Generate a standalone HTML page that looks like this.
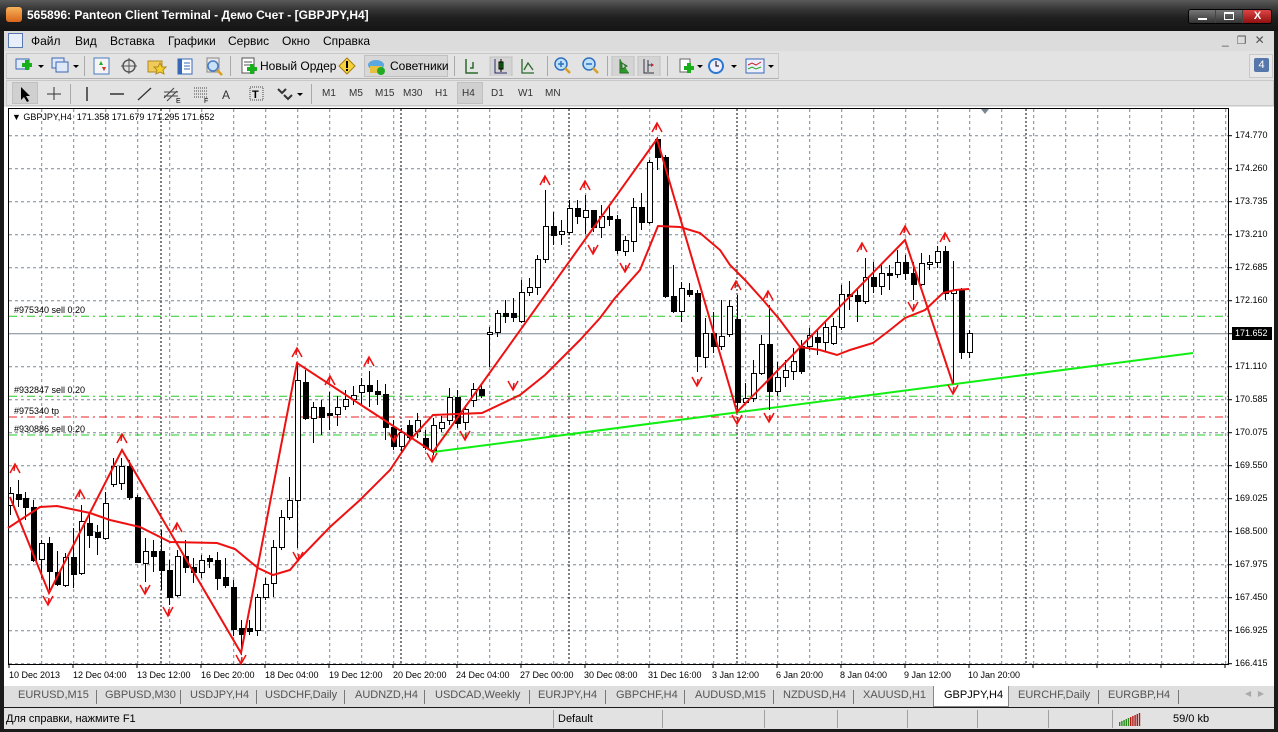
<!DOCTYPE html>
<html><head><meta charset="utf-8">
<style>
*{margin:0;padding:0;box-sizing:border-box}
body{width:1278px;height:732px;overflow:hidden;background:#1b1b1b;font-family:"Liberation Sans","DejaVu Sans",sans-serif;font-size:11px;color:#000;position:relative}
.a{position:absolute;white-space:nowrap}
#title{left:0;top:0;width:1278px;height:31px;background:linear-gradient(#5a5a5a 0,#3a3a3a 8px,#1e1e1e 18px,#141414 100%)}
#menu{left:4px;top:31px;width:1270px;height:20px;background:#dcdcdc}
#tb{left:4px;top:51px;width:1270px;height:56px;background:#e3e3e3}
.sep{position:absolute;width:1px;background:#a9a9a9}
.ico{position:absolute}
.tab{position:absolute;top:689px;font-size:11px;color:#555}
.tsep{position:absolute;top:690px;width:1px;height:14px;background:#777}
.ssep{position:absolute;top:710px;width:1px;height:18px;background:#a0a0a0}
</style></head><body>
<div class="a" id="title"></div>
<div class="a" style="left:6px;top:7px;width:16px;height:15px;border-radius:3px;background:linear-gradient(#f7b35a,#d9661b)"></div>
<div class="a" style="left:27px;top:8px;color:#fff;font-weight:bold;font-size:12px">565896: Panteon Client Terminal - Демо Счет - [GBPJPY,H4]</div>
<div class="a" style="left:1188px;top:9px;width:84px;height:15px;border:1px solid #000;border-radius:3px;overflow:hidden;background:#444">
 <div class="a" style="left:0;top:0;width:26px;height:13px;background:linear-gradient(#777,#333)"><div class="a" style="left:9px;top:8px;width:9px;height:2px;background:#fff"></div></div>
 <div class="a" style="left:27px;top:0;width:26px;height:13px;background:linear-gradient(#777,#333)"><div class="a" style="left:8px;top:2px;width:10px;height:8px;border:1px solid #fff;border-top-width:2px"></div></div>
 <div class="a" style="left:54px;top:0;width:29px;height:13px;background:linear-gradient(#d44,#901010);color:#fff;font-size:11px;font-weight:bold;text-align:center;line-height:13px">X</div>
</div>
<div class="a" id="menu"></div>
<div class="a" style="left:8px;top:33px;width:15px;height:15px;border:1px solid #5878b0;background:#e8eefc"></div>
<div class="a" style="left:31px;top:34px;font-size:12px">Файл</div>
<div class="a" style="left:75px;top:34px;font-size:12px">Вид</div>
<div class="a" style="left:110px;top:34px;font-size:12px">Вставка</div>
<div class="a" style="left:168px;top:34px;font-size:12px">Графики</div>
<div class="a" style="left:228px;top:34px;font-size:12px">Сервис</div>
<div class="a" style="left:282px;top:34px;font-size:12px">Окно</div>
<div class="a" style="left:323px;top:34px;font-size:12px">Справка</div>
<div class="a" style="left:1222px;top:33px;color:#555;font-size:12px;letter-spacing:8px">_<span style="font-size:11px">❐</span>✕</div>
<div class="a" id="tb"></div>
<div class="a" style="left:6px;top:53px;width:773px;height:26px;border:1px solid #c8c8c8;border-bottom-color:#b0b0b0"></div>
<div class="a" style="left:6px;top:80px;width:1268px;height:26px;border:1px solid #c8c8c8"></div>
<div class="sep" style="left:84px;top:56px;height:20px"></div>
<div class="sep" style="left:230px;top:56px;height:20px"></div>
<div class="sep" style="left:454px;top:56px;height:20px"></div>
<div class="sep" style="left:547px;top:56px;height:20px"></div>
<div class="sep" style="left:607px;top:56px;height:20px"></div>
<div class="sep" style="left:667px;top:56px;height:20px"></div>
<div class="sep" style="left:70px;top:84px;height:20px"></div>
<div class="sep" style="left:311px;top:84px;height:20px"></div>
<!-- toolbar icons row1 -->
<svg class="ico" style="left:14px;top:56px" width="262" height="20">
 <rect x="2" y="3" width="13" height="10" fill="#dfe9f8" stroke="#3b67b0"/><path d="M8 9h10M13 4v10" stroke="#17b01a" stroke-width="4"/><path d="M24 9l3 3 3-3z" fill="#000"/>
 <rect x="38" y="2" width="12" height="10" fill="#dfe9f8" stroke="#3b67b0"/><rect x="42" y="6" width="12" height="10" fill="#dfe9f8" stroke="#3b67b0"/><path d="M59 9l3 3 3-3z" fill="#000"/>
 <rect x="80" y="2" width="15" height="16" fill="#f4f4f4" stroke="#4a7cc4"/><path d="M85 9l2-4 2 4zM88 11l2 4 2-4z" fill="#2a2"/><path d="M88 11l2 4 2-4z" fill="#d33"/>
 <circle cx="115" cy="10" r="6" fill="none" stroke="#555" stroke-width="1.5"/><path d="M115 2v16M107 10h16" stroke="#555"/>
 <rect x="134" y="5" width="14" height="11" fill="#f0cb5c" stroke="#b08a20"/><path d="M146 7l2 4 4 0-3 3 1 4-4-2-4 2 1-4-3-3 4 0z" fill="#f5d12a" stroke="#b08a20"/>
 <rect x="164" y="3" width="14" height="15" fill="#fff" stroke="#3768b8"/><rect x="164" y="3" width="4" height="15" fill="#3768b8"/><path d="M170 7h6M170 10h6M170 13h6" stroke="#3768b8"/>
 <rect x="193" y="2" width="12" height="14" fill="#e8e8e8" stroke="#888"/><circle cx="199" cy="10" r="5" fill="#c9e2f8" stroke="#4a7cc4" stroke-width="1.5"/><path d="M203 14l5 5" stroke="#d9a020" stroke-width="2.5"/>
 <rect x="228" y="2" width="12" height="15" fill="#fff" stroke="#555"/><path d="M230 6h8M230 9h8" stroke="#555"/><path d="M233 13h10M238 8v10" stroke="#17b01a" stroke-width="4"/>
</svg>
<div class="a" style="left:260px;top:59px;font-size:12px">Новый Ордер</div>
<svg class="ico" style="left:338px;top:57px" width="20" height="18"><path d="M9 1l8 8-8 8-8-8z" fill="#f6d23c" stroke="#a88010"/><rect x="8" y="4" width="2" height="7" fill="#000"/><rect x="8" y="12" width="2" height="2" fill="#000"/></svg>
<div class="a" style="left:364px;top:55px;width:84px;height:22px;border:1px solid #c0c0c0;background:#d8d8d8"></div>
<svg class="ico" style="left:367px;top:57px" width="20" height="18"><ellipse cx="9" cy="8" rx="8" ry="5" fill="#5aa8e0"/><rect x="3" y="9" width="12" height="7" fill="#e8c040"/><circle cx="14" cy="14" r="4" fill="#2a2"/></svg>
<div class="a" style="left:390px;top:59px;font-size:12px">Советники</div>
<svg class="ico" style="left:462px;top:56px" width="320" height="20">
 <path d="M4 3v14h12M8 12h3V6" stroke="#2a6a2a" stroke-width="1.5" fill="none"/>
 <rect x="28" y="1" width="22" height="20" fill="#d4d4d4" stroke="#c0c0c0"/><path d="M33 3v14h12" stroke="#2a2a6a" fill="none"/><rect x="37" y="6" width="4" height="7" fill="#1a9a1a" stroke="#000"/><path d="M39 3v13" stroke="#000"/>
 <path d="M60 3v14h12M62 14l4-7 5 7" stroke="#2a6a2a" stroke-width="1.3" fill="none"/>
 <circle cx="99" cy="8" r="6" fill="#bfe0fa" stroke="#2f6fc0" stroke-width="1.5"/><path d="M96 8h6M99 5v6" stroke="#2f6fc0" stroke-width="1.5"/><path d="M103 12l5 5" stroke="#d9a020" stroke-width="2.5"/>
 <circle cx="127" cy="8" r="6" fill="#bfe0fa" stroke="#2f6fc0" stroke-width="1.5"/><path d="M124 8h6" stroke="#2f6fc0" stroke-width="1.5"/><path d="M131 12l5 5" stroke="#d9a020" stroke-width="2.5"/>
 <rect x="150" y="0" width="22" height="21" fill="#d4d4d4" stroke="#c0c0c0"/><path d="M158 3v14h9M160 7l5 3-5 3z" stroke="#2a6a2a" fill="#2a9a2a"/>
 <rect x="176" y="0" width="22" height="21" fill="#d4d4d4" stroke="#c0c0c0"/><path d="M182 3v14h10M186 4v12M186 9h5" stroke="#334" fill="none"/><path d="M189 7l3 2-3 2" fill="#c22"/>
 <rect x="218" y="3" width="10" height="13" fill="#fff" stroke="#666"/><path d="M222 12h10M227 7v10" stroke="#17b01a" stroke-width="4"/><path d="M235 9l3 3 3-3z" fill="#000"/>
 <circle cx="254" cy="10" r="8" fill="#2a78d0"/><circle cx="254" cy="10" r="6" fill="#eef"/><path d="M254 5v5h3" stroke="#000" fill="none"/><path d="M269 9l3 3 3-3z" fill="#000"/>
 <rect x="284" y="3" width="18" height="14" fill="#eef" stroke="#3a6ab8"/><path d="M286 9l4-2 4 2 5-3" stroke="#c22" fill="none"/><path d="M286 13l4-2 4 2 5-2" stroke="#2a2" fill="none"/><path d="M306 9l3 3 3-3z" fill="#000"/>
</svg>
<div class="a" style="left:1249px;top:54px;width:24px;height:24px;border:1px solid #c8c8c8;background:#e8e8e8"><div class="a" style="left:4px;top:3px;width:15px;height:14px;background:#5577aa;color:#fff;font-size:11px;text-align:center;line-height:14px;border-radius:2px">4</div></div>
<!-- row2 -->
<div class="a" style="left:12px;top:82px;width:26px;height:22px;background:#d0d0d0;border:1px solid #c0c0c0"></div>
<svg class="ico" style="left:14px;top:84px" width="300" height="20">
 <path d="M7 3v13l3-3 3 5 2-1-3-5h4z" fill="#000"/>
 <path d="M40 3v13M33 10h14" stroke="#333" stroke-width="1"/>
 <path d="M73 3v14" stroke="#333" stroke-width="1.5"/>
 <path d="M96 10h14" stroke="#333" stroke-width="1.5"/>
 <path d="M124 16l13-12" stroke="#333" stroke-width="1.3"/>
 <path d="M150 14l10-10M153 17l10-10M150 8h14M150 12h14" stroke="#444" fill="none"/><text x="162" y="19" font-size="7" font-family="Liberation Sans">E</text>
 <path d="M180 4h14M180 7h14M180 10h14M180 13h14" stroke="#444" stroke-dasharray="1 1"/><text x="190" y="19" font-size="7" font-family="Liberation Sans">F</text>
 <text x="208" y="15" font-size="12" font-family="Liberation Sans" fill="#333">A</text>
 <rect x="236" y="3" width="13" height="13" fill="none" stroke="#444" stroke-dasharray="1 1"/><text x="238" y="14" font-size="11" font-family="Liberation Sans" font-weight="bold">T</text>
 <path d="M264 5l4 4 4-4M270 11l4 4 4-4" stroke="#333" stroke-width="2" fill="none"/><path d="M283 9l3 3 3-3z" fill="#000"/>
</svg>
<div class="a" style="left:457px;top:82px;width:26px;height:22px;background:#d0d0d0;border:1px solid #c0c0c0"></div>
<div class="a" style="left:322px;top:88px;color:#333;font-size:10px">M1</div>
<div class="a" style="left:349px;top:88px;color:#333;font-size:10px">M5</div>
<div class="a" style="left:375px;top:88px;color:#333;font-size:10px">M15</div>
<div class="a" style="left:403px;top:88px;color:#333;font-size:10px">M30</div>
<div class="a" style="left:435px;top:88px;color:#333;font-size:10px">H1</div>
<div class="a" style="left:462px;top:88px;color:#333;font-size:10px">H4</div>
<div class="a" style="left:491px;top:88px;color:#333;font-size:10px">D1</div>
<div class="a" style="left:518px;top:88px;color:#333;font-size:10px">W1</div>
<div class="a" style="left:545px;top:88px;color:#333;font-size:10px">MN</div>
<!-- chart -->
<div class="a" style="left:4px;top:107px;width:1270px;height:579px;background:#fff"></div>
<svg id="ch" class="a" style="left:0;top:0" width="1278" height="732"></svg>
<div class="a" style="left:12px;top:112px;font-size:9px">▼ GBPJPY,H4&nbsp; 171.358 171.679 171.295 171.652</div>
<div class="a" style="left:14px;top:305px;font-size:9px">#975340 sell 0.20</div>
<div class="a" style="left:14px;top:385px;font-size:9px">#932847 sell 0.20</div>
<div class="a" style="left:14px;top:406px;font-size:9px">#975340 tp</div>
<div class="a" style="left:14px;top:424px;font-size:9px">#930886 sell 0.20</div>
<div class="a" style="left:1235px;top:130px;font-size:9px">174.770</div>
<div class="a" style="left:1235px;top:163px;font-size:9px">174.260</div>
<div class="a" style="left:1235px;top:196px;font-size:9px">173.735</div>
<div class="a" style="left:1235px;top:229px;font-size:9px">173.210</div>
<div class="a" style="left:1235px;top:262px;font-size:9px">172.685</div>
<div class="a" style="left:1235px;top:295px;font-size:9px">172.160</div>
<div class="a" style="left:1232px;top:327px;width:40px;height:13px;background:#000;color:#fff;font-size:9px;padding-left:3px;line-height:13px">171.652</div>
<div class="a" style="left:1235px;top:361px;font-size:9px">171.110</div>
<div class="a" style="left:1235px;top:394px;font-size:9px">170.585</div>
<div class="a" style="left:1235px;top:427px;font-size:9px">170.075</div>
<div class="a" style="left:1235px;top:460px;font-size:9px">169.550</div>
<div class="a" style="left:1235px;top:493px;font-size:9px">169.025</div>
<div class="a" style="left:1235px;top:526px;font-size:9px">168.500</div>
<div class="a" style="left:1235px;top:559px;font-size:9px">167.975</div>
<div class="a" style="left:1235px;top:592px;font-size:9px">167.450</div>
<div class="a" style="left:1235px;top:625px;font-size:9px">166.925</div>
<div class="a" style="left:1235px;top:658px;font-size:9px">166.415</div>
<div class="a" style="left:9px;top:670px;font-size:9px">10 Dec 2013</div>
<div class="a" style="left:73px;top:670px;font-size:9px">12 Dec 04:00</div>
<div class="a" style="left:137px;top:670px;font-size:9px">13 Dec 12:00</div>
<div class="a" style="left:201px;top:670px;font-size:9px">16 Dec 20:00</div>
<div class="a" style="left:265px;top:670px;font-size:9px">18 Dec 04:00</div>
<div class="a" style="left:329px;top:670px;font-size:9px">19 Dec 12:00</div>
<div class="a" style="left:393px;top:670px;font-size:9px">20 Dec 20:00</div>
<div class="a" style="left:456px;top:670px;font-size:9px">24 Dec 04:00</div>
<div class="a" style="left:520px;top:670px;font-size:9px">27 Dec 00:00</div>
<div class="a" style="left:584px;top:670px;font-size:9px">30 Dec 08:00</div>
<div class="a" style="left:648px;top:670px;font-size:9px">31 Dec 16:00</div>
<div class="a" style="left:712px;top:670px;font-size:9px">3 Jan 12:00</div>
<div class="a" style="left:776px;top:670px;font-size:9px">6 Jan 20:00</div>
<div class="a" style="left:840px;top:670px;font-size:9px">8 Jan 04:00</div>
<div class="a" style="left:904px;top:670px;font-size:9px">9 Jan 12:00</div>
<div class="a" style="left:968px;top:670px;font-size:9px">10 Jan 20:00</div>
<!-- tabs -->
<div class="a" style="left:4px;top:686px;width:1270px;height:21px;background:#dedede"></div>
<div class="a" style="left:933px;top:686px;width:76px;height:21px;background:#fff;border:1px solid #888;border-top:none"></div>
<div class="tab" style="left:18px">EURUSD,M15</div><div class="tsep" style="left:96px"></div>
<div class="tab" style="left:105px">GBPUSD,M30</div><div class="tsep" style="left:180px"></div>
<div class="tab" style="left:190px">USDJPY,H4</div><div class="tsep" style="left:256px"></div>
<div class="tab" style="left:265px">USDCHF,Daily</div><div class="tsep" style="left:344px"></div>
<div class="tab" style="left:355px">AUDNZD,H4</div><div class="tsep" style="left:424px"></div>
<div class="tab" style="left:435px">USDCAD,Weekly</div><div class="tsep" style="left:529px"></div>
<div class="tab" style="left:538px">EURJPY,H4</div><div class="tsep" style="left:605px"></div>
<div class="tab" style="left:616px">GBPCHF,H4</div><div class="tsep" style="left:684px"></div>
<div class="tab" style="left:695px">AUDUSD,M15</div><div class="tsep" style="left:773px"></div>
<div class="tab" style="left:783px">NZDUSD,H4</div><div class="tsep" style="left:853px"></div>
<div class="tab" style="left:863px">XAUUSD,H1</div>
<div class="tab" style="left:944px;color:#000">GBPJPY,H4</div>
<div class="tab" style="left:1018px">EURCHF,Daily</div><div class="tsep" style="left:1098px"></div>
<div class="tab" style="left:1108px">EURGBP,H4</div><div class="tsep" style="left:1178px"></div>
<div class="tab" style="left:1245px;color:#aaa;font-size:8px">◀&nbsp;&nbsp;&nbsp;▶</div>
<!-- status -->
<div class="a" style="left:4px;top:708px;width:1270px;height:21px;background:#e2e2e2"></div>
<div class="a" style="left:6px;top:713px;font-size:11px">Для справки, нажмите F1</div>
<div class="ssep" style="left:553px"></div>
<div class="a" style="left:558px;top:713px;font-size:11px">Default</div>
<div class="ssep" style="left:662px"></div><div class="ssep" style="left:764px"></div><div class="ssep" style="left:837px"></div><div class="ssep" style="left:907px"></div><div class="ssep" style="left:977px"></div><div class="ssep" style="left:1048px"></div><div class="ssep" style="left:1112px"></div>
<svg class="a" style="left:1119px;top:711px" width="24" height="16" id="bars"></svg>
<div class="a" style="left:1173px;top:713px;font-size:11px">59/0 kb</div>
<script>
var s='',NS='';
// grid verticals
for(var x=41.7;x<1226;x+=32) s+='<line x1="'+x+'" y1="109" x2="'+x+'" y2="664" stroke="#7b8794" stroke-dasharray="3 3"/>';
for(var y=135.7;y<664;y+=33) if(Math.abs(y-333.7)>2) s+='<line x1="9" y1="'+y+'" x2="1228" y2="'+y+'" stroke="#7b8794" stroke-dasharray="3 3"/>';
[161,401,569,737,1026].forEach(function(x){s+='<line x1="'+x+'" y1="109" x2="'+x+'" y2="664" stroke="#000" stroke-dasharray="2 2"/>';});
s+='<line x1="9" y1="333.7" x2="1228" y2="333.7" stroke="#7b8794"/>';
[316.3,396.3,435].forEach(function(y){s+='<line x1="9" y1="'+y+'" x2="1228" y2="'+y+'" stroke="#22cc22" stroke-dasharray="8 4 2 4"/>';});
s+='<line x1="9" y1="417" x2="1228" y2="417" stroke="#e22" stroke-dasharray="8 4 2 4"/>';
// border
s+='<rect x="8.5" y="108.5" width="1220" height="556" fill="none" stroke="#000"/>';
for(var y=135.7;y<664;y+=33) s+='<line x1="1228" y1="'+y+'" x2="1232" y2="'+y+'" stroke="#000"/>';
for(var x=9;x<1228;x+=64) s+='<line x1="'+x+'" y1="664" x2="'+x+'" y2="668" stroke="#000"/>';
s+='<path d="M981 109l4 5 4-5z" fill="#7b8794"/>';
var c=[[10,493,505,1,487,515],[18,494,499,0,480,507],[25,498,507,0,492,520],[33,507,560,0,500,562],[41,543,559,1,540,578],[49,543,571,0,537,590],[57,572,584,0,551,586],[65,557,585,1,553,587],[73,557,574,0,528,588],[81,521,573,1,505,575],[89,523,535,0,515,548],[97,532,537,0,525,555],[105,503,538,1,492,540],[113,466,484,1,458,487],[121,466,483,1,458,490],[129,466,497,0,460,500],[137,497,562,0,495,563],[145,551,563,1,538,582],[153,551,556,0,540,572],[161,551,570,0,530,590],[169,570,597,0,560,605],[177,556,595,1,550,597],[185,556,567,0,540,573],[193,567,572,0,558,583],[201,560,572,1,555,578],[209,558,561,0,555,568],[217,560,578,0,552,590],[225,577,585,0,558,588],[233,587,629,0,580,636],[241,628,634,0,620,655],[249,628,631,0,620,635],[257,597,630,1,594,636],[265,584,597,1,578,600],[273,547,583,1,540,597],[281,517,547,1,510,550],[289,500,517,1,477,520],[297,380,500,1,363,548],[305,382,418,0,370,420],[313,407,418,1,402,443],[321,407,417,0,400,435],[329,413,415,0,392,430],[337,407,414,1,396,426],[345,399,406,1,390,410],[353,395,399,1,386,405],[361,385,392,1,378,405],[369,385,391,0,371,407],[377,391,394,0,380,405],[385,394,427,0,384,440],[393,427,446,0,420,450],[401,432,446,1,428,453],[409,425,437,0,420,440],[417,420,431,1,413,438],[425,438,447,0,430,450],[433,425,450,1,418,455],[441,422,428,1,416,432],[449,397,420,1,388,425],[457,397,423,0,390,428],[465,409,422,1,405,430],[473,389,400,1,383,407],[481,389,395,0,384,398],[489,332,334,1,327,367],[497,313,332,1,310,337],[505,313,316,0,300,323],[513,313,317,0,298,322],[521,292,321,1,280,323],[529,287,292,1,278,296],[537,259,287,1,255,295],[545,226,259,1,190,263],[553,226,235,0,212,245],[561,231,234,1,220,245],[569,208,232,1,200,235],[577,208,216,0,200,224],[585,210,217,1,195,234],[593,210,227,0,210,232],[601,216,227,1,205,238],[609,216,219,0,205,226],[617,219,250,0,215,254],[625,240,251,1,236,256],[633,207,241,1,198,252],[641,207,222,0,193,230],[649,162,222,1,160,224],[657,139,157,0,137,170],[665,157,296,0,155,298],[673,296,311,0,265,313],[681,288,311,1,282,322],[689,290,294,0,283,297],[697,293,356,0,290,372],[705,333,357,1,318,368],[713,333,346,0,312,353],[721,336,346,1,300,350],[729,306,334,1,300,337],[737,319,402,0,295,410],[745,398,402,1,383,404],[753,373,398,1,360,402],[761,344,373,1,335,375],[769,344,391,0,305,410],[777,377,391,1,362,396],[785,370,377,1,360,387],[793,361,371,1,348,380],[801,346,371,0,340,374],[809,335,346,1,328,350],[817,337,342,0,330,355],[825,327,342,1,322,352],[833,326,343,1,318,345],[841,294,327,1,285,330],[849,294,296,0,281,310],[857,295,301,0,288,322],[865,277,301,1,258,304],[873,277,286,0,262,293],[881,273,286,1,264,295],[889,273,275,0,265,290],[897,262,274,1,250,278],[905,262,273,0,255,280],[913,273,284,0,262,300],[921,263,284,1,253,286],[929,262,264,1,255,270],[937,251,262,1,246,268],[945,251,293,0,246,300],[953,290,293,1,261,383],[961,290,352,0,288,359],[969,333,352,1,330,358]];
// green trend
s+='<line x1="433" y1="452" x2="1193" y2="353" stroke="#11ee11" stroke-width="2"/>';
c.forEach(function(d){var x=d[0]+.5;s+='<line x1="'+x+'" y1="'+d[4]+'" x2="'+x+'" y2="'+d[5]+'" stroke="#000"/>';
 var h=Math.max(d[2]-d[1],1);s+='<rect x="'+(d[0]-2)+'.5" y="'+d[1]+'.5" width="5" height="'+h+'" fill="'+(d[3]?'#fff':'#000')+'" stroke="#000"/>';});
s+='<polyline points="8,528 40,507 57,506 90,513 110,520 140,527 170,542 217,543 235,549 258,568 273,575 290,570 300,558 330,527 360,500 390,470 410,440 433,415 482,413 520,395 545,375 560,360 580,340 600,318 615,298 640,270 658,226 680,227 700,233 720,250 730,265 745,280 763,300 780,320 800,347 820,350 837,355 850,350 873,343 890,330 905,318 925,310 943,293 955,290 969,289" fill="none" stroke="#ee1111" stroke-width="2"/>';
s+='<polyline points="10,497 49,593 122,450 241,653 297,363 433,452 657,139 737,412 905,240 953,384" fill="none" stroke="#ee1111" stroke-width="2"/>';
var up=[[15,468],[80,494],[122,438],[177,527],[297,352],[330,380],[369,361],[545,180],[585,185],[657,127],[736,285],[768,295],[862,247],[905,230],[945,237]];
var dn=[[48,601],[145,590],[168,612],[241,660],[298,557],[394,438],[432,458],[465,436],[513,386],[593,250],[625,268],[697,382],[737,420],[769,418],[913,307],[953,390]];
up.forEach(function(p){var x=p[0],y=p[1];s+='<path d="M'+(x-5)+' '+(y+5)+'L'+x+' '+(y-4)+'L'+(x+5)+' '+(y+5)+'M'+x+' '+(y-4)+'L'+(x-1)+' '+(y+3)+'" fill="none" stroke="#ee1111" stroke-width="1.5"/>';});
dn.forEach(function(p){var x=p[0],y=p[1];s+='<path d="M'+(x-5)+' '+(y-5)+'L'+x+' '+(y+4)+'L'+(x+5)+' '+(y-5)+'M'+x+' '+(y+4)+'L'+(x+1)+' '+(y-3)+'" fill="none" stroke="#ee1111" stroke-width="1.5"/>';});
document.getElementById('ch').innerHTML=s;
var b='';for(var i=0;i<10;i++){var h=4+i;b+='<rect x="'+(i*2.2)+'" y="'+(15-h)+'" width="1.4" height="'+h+'" fill="'+(i<5?'#2a8a1a':'#b01818')+'"/>';}
document.getElementById('bars').innerHTML=b;
</script>
</body></html>
